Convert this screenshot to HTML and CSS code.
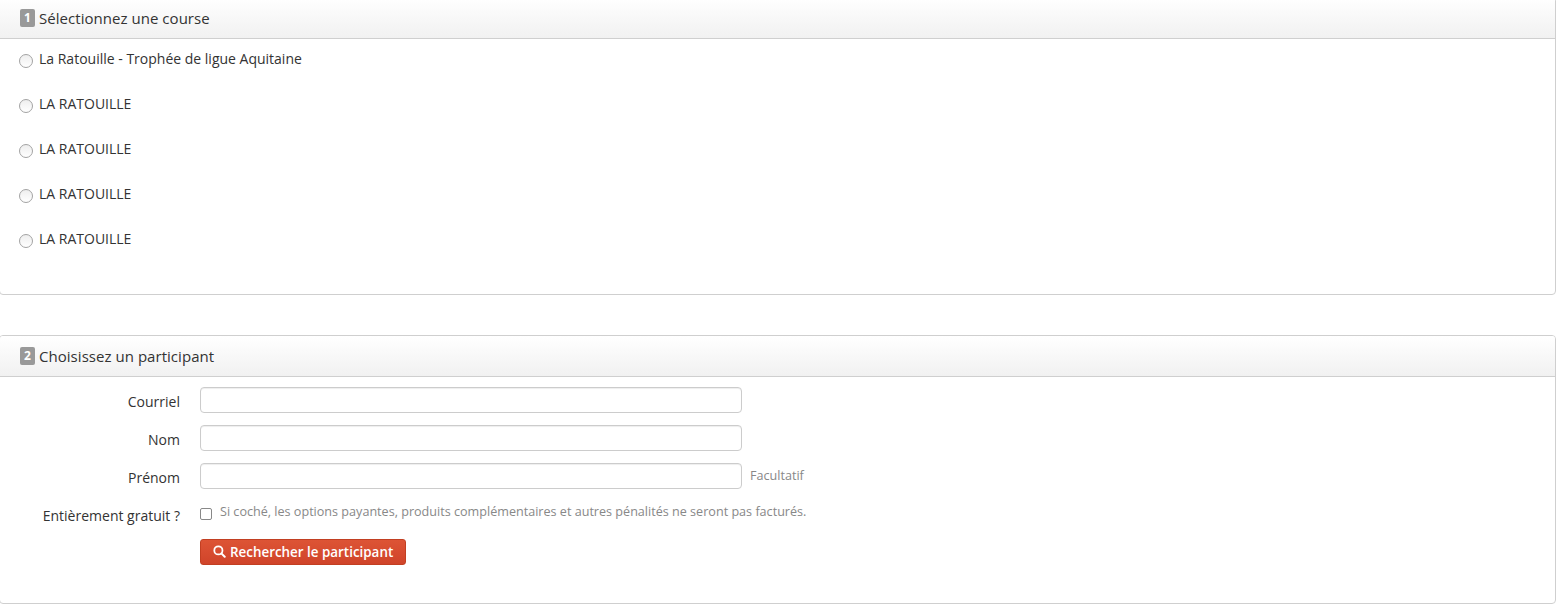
FILE: index.html
```html
<!DOCTYPE html>
<html lang="fr">
<head>
<meta charset="utf-8">
<title>Inscription</title>
<link rel="stylesheet" href="styles.css">
</head>
<body>
<section class="panel panel-first">
  <h2 class="panel-head"><span class="step">1</span>Sélectionnez une course</h2>
  <div class="race-list">
    <label class="race"><input type="radio" name="race"><span>La Ratouille - Trophée de ligue Aquitaine</span></label>
    <label class="race"><input type="radio" name="race"><span>LA RATOUILLE</span></label>
    <label class="race"><input type="radio" name="race"><span>LA RATOUILLE</span></label>
    <label class="race"><input type="radio" name="race"><span>LA RATOUILLE</span></label>
    <label class="race"><input type="radio" name="race"><span>LA RATOUILLE</span></label>
  </div>
</section>
<section class="panel panel-second">
  <h2 class="panel-head"><span class="step">2</span>Choisissez un participant</h2>
  <form class="form">
    <div class="row"><label class="lbl">Courriel</label><input class="field" type="text"></div>
    <div class="row"><label class="lbl">Nom</label><input class="field" type="text"></div>
    <div class="row"><label class="lbl">Prénom</label><input class="field" type="text"><span class="hint hint-side">Facultatif</span></div>
    <div class="row row-check"><label class="lbl">Entièrement gratuit ?</label><input class="check" type="checkbox"><span class="hint">Si coché, les options payantes, produits complémentaires et autres pénalités ne seront pas facturés.</span></div>
    <div class="row row-btn">
      <button class="btn" type="button">
        <svg class="btn-icon" viewBox="0 0 14 14" width="13" height="13" aria-hidden="true"><circle cx="5.8" cy="5.8" r="4.4" fill="none" stroke="#fff" stroke-width="1.9"/><path d="M9 9l3.6 3.6" stroke="#fff" stroke-width="2.2" stroke-linecap="round"/></svg>
        Rechercher le participant
      </button>
    </div>
  </form>
</section>
</body>
</html>
```
FILE: styles.css
```css
* { box-sizing: border-box; }
html, body { margin: 0; padding: 0; background: #fff; }
body {
  font-family: "Open Sans", "Liberation Sans", sans-serif;
  font-size: 14px;
  color: #333;
  overflow: hidden;
}
.panel {
  width: 1557px;
  margin-left: -1px;
  border: 1px solid #cfcfcf;
  border-radius: 4px;
  background: #fff;
}
.panel-first { margin-top: -3px; height: 298px; }
.panel-second { margin-top: 40px; height: 269px; }
.panel-head {
  display: flex;
  align-items: center;
  height: 41px;
  margin: 0;
  padding: 0 20px;
  font-size: 15px;
  letter-spacing: .04px;
  font-weight: 400;
  color: #333;
  background: linear-gradient(#fff, #f1f1f1);
  border-bottom: 1px solid #cfcfcf;
  border-radius: 3px 3px 0 0;
}
.step {
  width: 15px;
  height: 18px;
  margin-right: 4px;
  border-radius: 2px;
  background: #999;
  color: #fff;
  font-size: 12px;
  font-weight: 700;
  line-height: 18px;
  letter-spacing: 0;
  text-align: center;
}
.race-list { padding: 4px 19px 0; }
.race {
  display: flex;
  align-items: center;
  height: 45px;
  padding-bottom: 14px;
  color: #333;
}
.race input {
  appearance: none;
  flex: none;
  width: 14px;
  height: 14px;
  margin: 5px 6px 0 0;
  border: 1px solid #a3a3a3;
  border-radius: 50%;
  background: linear-gradient(#eee, #fff);
}
.form { padding-top: 10px; }
.row {
  display: flex;
  align-items: center;
  height: 26px;
  margin-bottom: 12px;
}
.lbl {
  flex: none;
  width: 180px;
  margin-right: 20px;
  padding-top: 3px;
  text-align: right;
}
.field {
  flex: none;
  width: 542px;
  height: 26px;
  border: 1px solid #ccc;
  border-radius: 4px;
  background: #fff;
  box-shadow: inset 0 1px 1px rgba(0,0,0,.07);
}
.hint { font-size: 12.6px; color: #888; }
.hint-side { margin: -1px 0 0 8px; }
.row-check { height: 20px; margin: 4px 0 0; }
.row-check .lbl { padding-top: 9px; }
.check {
  appearance: none;
  flex: none;
  width: 12px;
  height: 12px;
  margin: 6px 8px 0 0;
  border: 1px solid #888;
  border-radius: 2px;
  background: #fff;
}
.row-check .hint { margin-top: 0; }
.row-btn { margin: 18px 0 0; padding-left: 200px; }
.btn {
  display: flex;
  align-items: center;
  gap: 4px;
  width: 206px;
  height: 26px;
  padding: 0 0 1px 12px;
  border: 1px solid #c23f22;
  border-radius: 3px;
  background: linear-gradient(#dd5435, #d0442a);
  color: #fff;
  font-family: inherit;
  font-size: 13.4px;
  font-weight: 600;
}
.btn-icon { flex: none; }
```
